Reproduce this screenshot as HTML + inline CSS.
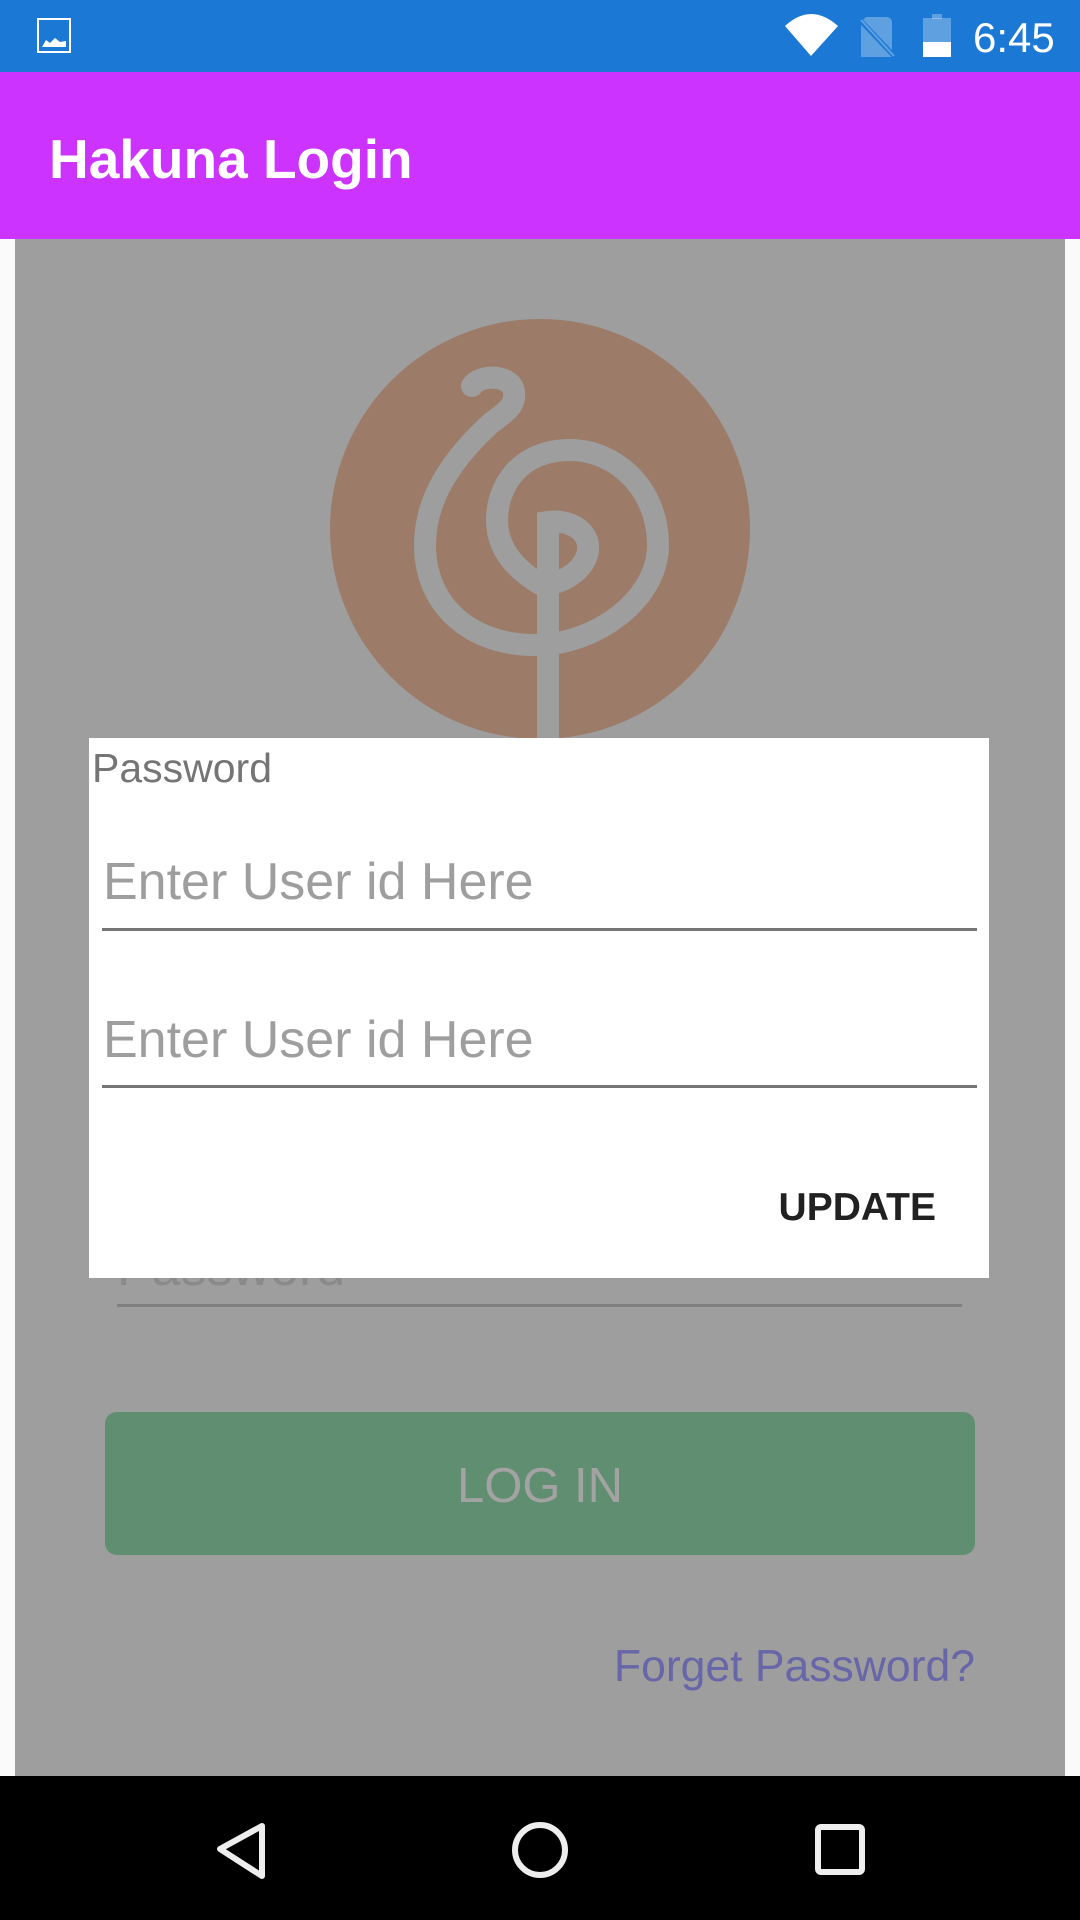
<!DOCTYPE html>
<html><head><meta charset="utf-8">
<style>
*{margin:0;padding:0;box-sizing:border-box}
body{width:1080px;height:1920px;position:relative;overflow:hidden;background:#fafafa;font-family:"Liberation Sans",Roboto,sans-serif}
.abs{position:absolute}
</style></head><body>
<div class="abs" style="left:0;top:0;width:1080px;height:72px;background:#1b78d4"></div>
<div class="abs" style="left:37px;top:18px;width:34px;height:35px;border:2.5px solid #fff"></div>
<svg class="abs" style="left:0;top:0" width="1080" height="72">
<path d="M42 47 L46 40 L50 43 L55 38 L60 42 L66 41 L66 47 Z" fill="#fff"/>
<path d="M785 26 Q811 2 838 26 L811 56 Z" fill="#fff"/>
<path d="M866 17 L886 17 Q892 17 892 23 L892 57 L861 57 L861 22 Z" fill="#fff" opacity="0.3"/>
<path d="M858 18 L896 58" stroke="#1b78d4" stroke-width="5"/>
<path d="M861 20 L894 56" stroke="#fff" stroke-width="2" opacity="0.3"/>
<rect x="932" y="14" width="10" height="5" fill="#fff" opacity="0.3"/>
<rect x="923" y="18" width="28" height="24" fill="#fff" opacity="0.3"/>
<rect x="923" y="42" width="28" height="15" fill="#fff"/>
<text x="973" y="52" font-family="Liberation Sans" font-size="42" fill="#fff">6:45</text>
</svg>
<div class="abs" style="left:0;top:72px;width:1080px;height:167px;background:#cc33ff"></div>
<div class="abs" style="left:49px;top:122px;font-size:55px;font-weight:bold;color:#fff;line-height:74px">Hakuna Login</div>
<div class="abs" style="left:15px;top:239px;width:1050px;height:1537px;background:#9e9e9e"></div>
<svg class="abs" style="left:0;top:239px" width="1080" height="500" viewBox="0 239 1080 500">
<circle cx="540" cy="529" r="210" fill="#9c7b69"/>
<g fill="none" stroke="#9e9e9e" stroke-width="22" stroke-linecap="round">
<path d="M472 386 C480 374 512 374 514 392 C516 408 502 414 490 424 C440 470 425 510 425 545 C425 605 470 645 535 645 C595 645 658 600 658 545 C658 488 615 450 570 450 C518 450 497 488 497 520 C497 552 520 572 540 584"/>
<path d="M548 760 L548 522 C568 519 590 530 588 550 C586 568 566 582 548 584" stroke-linecap="butt"/>
</g>
</svg>
<div class="abs" style="left:117px;top:1238px;font-size:52px;color:#8a8a8a;line-height:60px">Password</div>
<div class="abs" style="left:117px;top:1304px;width:845px;height:3px;background:#808080"></div>
<div class="abs" style="left:105px;top:1412px;width:870px;height:143px;background:#608e70;border-radius:12px"></div>
<div class="abs" style="left:105px;top:1454px;width:870px;text-align:center;font-size:49px;color:#a3a3a3;line-height:64px">LOG IN</div>
<div class="abs" style="left:500px;top:1637px;width:475px;text-align:right;font-size:44.5px;color:#6666a8;line-height:60px">Forget Password?</div>
<div class="abs" style="left:89px;top:738px;width:900px;height:540px;background:#fff"></div>
<div class="abs" style="left:92px;top:745px;font-size:41px;color:#757575;line-height:46px">Password</div>
<div class="abs" style="left:103px;top:852px;font-size:52px;color:#9e9e9e;line-height:60px">Enter User id Here</div>
<div class="abs" style="left:102px;top:928px;width:875px;height:3px;background:#757575"></div>
<div class="abs" style="left:103px;top:1010px;font-size:52px;color:#9e9e9e;line-height:60px">Enter User id Here</div>
<div class="abs" style="left:102px;top:1085px;width:875px;height:3px;background:#757575"></div>
<div class="abs" style="left:700px;top:1183px;width:236px;text-align:right;font-size:39px;font-weight:bold;color:#212121;line-height:50px">UPDATE</div>
<div class="abs" style="left:0;top:1776px;width:1080px;height:144px;background:#000"></div>
<svg class="abs" style="left:0;top:1776px" width="1080" height="144">
<path d="M262 50 L262 100 L220 73 Z" fill="none" stroke="#eee" stroke-width="6" stroke-linejoin="round"/>
<circle cx="540" cy="74" r="25" fill="none" stroke="#eee" stroke-width="6"/>
<rect x="818" y="51" width="44" height="45" rx="3" fill="none" stroke="#eee" stroke-width="6"/>
</svg>
</body></html>
